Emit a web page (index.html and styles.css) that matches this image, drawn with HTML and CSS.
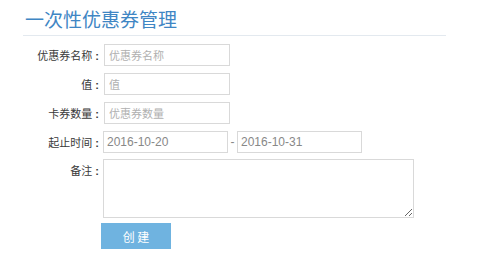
FILE: index.html
```html
<!DOCTYPE html>
<html lang="zh-CN">
<head>
  <title>一次性优惠券管理</title>
  <meta charset="utf-8">
  <link rel="stylesheet" href="styles.css">
</head>
<body>
  <div id="page">
    <div class="page-header">
      <h1>一次性优惠券管理</h1>
    </div>
    <form class="coupon-form">
      <div class="row">
        <label for="name">优惠券名称</label>
        <input type="text" id="name" class="text" placeholder="优惠券名称">
      </div>
      <div class="row">
        <label for="value">值</label>
        <input type="text" id="value" class="text" placeholder="值">
      </div>
      <div class="row">
        <label for="qty">卡券数量</label>
        <input type="text" id="qty" class="text" placeholder="优惠券数量">
      </div>
      <div class="row dates">
        <label for="start">起止时间</label>
        <input type="text" id="start" class="date" value="2016-10-20">
        <span class="dash">-</span>
        <input type="text" id="end" class="date" value="2016-10-31">
      </div>
      <div class="row note">
        <label for="remark">备注</label>
        <textarea id="remark"></textarea>
      </div>
      <div class="row actions">
        <button type="button" class="btn-info">创 建</button>
      </div>
    </form>
  </div>
</body>
</html>
```

FILE: styles.css
```css
body {
  margin: 0;
  font-family: "Liberation Sans", "Noto Sans CJK SC", sans-serif;
  font-size: 12px;
  color: #393939;
  background: #fff;
}
#page {
  width: 423px;
  padding: 7px 0 0 23px;
}
.page-header {
  border-bottom: 1px solid #e3e9ef;
  padding: 0 0 4px 2px;
}
.page-header h1 {
  margin: 0;
  font-family: "Noto Sans CJK SC", sans-serif;
  font-size: 19px;
  font-weight: normal;
  line-height: 24px;
  color: #3f86c4;
}
.coupon-form {
  margin-top: 8px;
}
.row {
  display: flex;
  align-items: center;
  margin-bottom: 7px;
}
.row label {
  width: 80px;
  text-align: right;
  font-family: "Noto Sans CJK SC", sans-serif;
  font-size: 11px;
  color: #393939;
}
.row label::after {
  content: ":";
  font-family: "Liberation Sans", sans-serif;
  font-weight: bold;
  padding: 0 4px 0 3px;  /* spaced colon like the original */
}
input, textarea {
  box-sizing: border-box;
  border: 1px solid #d9d9d9;
  margin: 0;
  background: #fff;
  outline: none;
}
.text {
  width: 126px;
  height: 22px;
  margin-left: 1px;
  padding: 0 4px;
  font-family: "Noto Sans CJK SC", sans-serif;
  font-size: 11px;
  color: #858585;
}
.text::placeholder {
  color: #b0b0b0;
}
.dates {
  margin-bottom: 6px;
}
.date {
  width: 125px;
  height: 22px;
  padding: 0 3px;
  font-family: "Liberation Sans", sans-serif;
  font-size: 12px;
  color: #888;
}
.dash {
  width: 9px;
  text-align: center;
  color: #888;
}
.note {
  align-items: flex-start;
  margin-bottom: 5px;
}
.note label {
  padding-top: 3px;
}
textarea {
  width: 311px;
  height: 59px;
  resize: both;
}
.actions {
  padding-left: 78px;
}
.btn-info {
  width: 70px;
  height: 26px;
  border: 1px solid #6fb3e0;
  background-color: #6fb3e0;
  color: #fff;
  font-family: "Noto Sans CJK SC", sans-serif;
  font-size: 12px;
  padding: 0;
}
```
